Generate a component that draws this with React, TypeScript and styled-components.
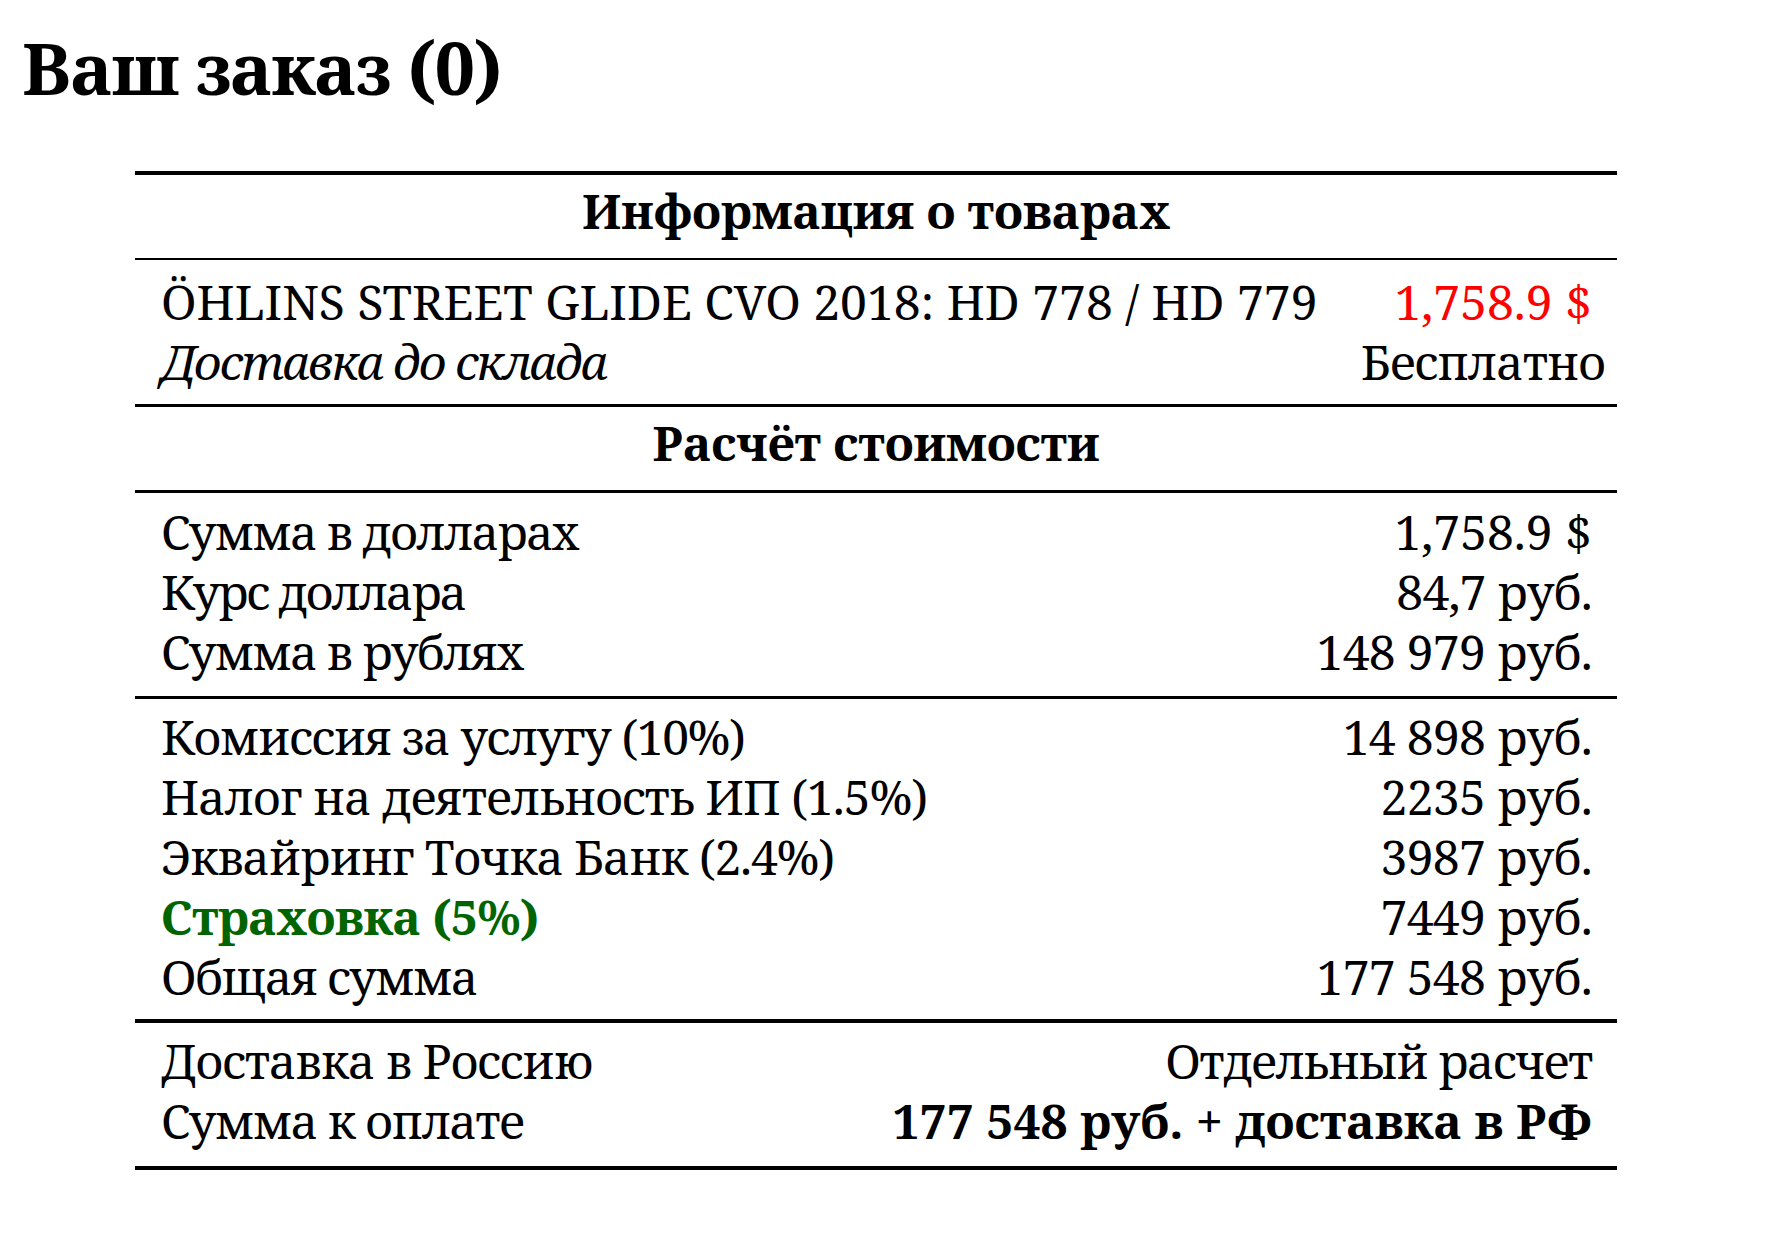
import React from "react";
import styled, { createGlobalStyle } from "styled-components";

const GlobalStyle = createGlobalStyle`
  html, body {
    margin: 0;
    padding: 0;
    background: #ffffff;
  }
  body {
    font-family: "Noto Serif", "DejaVu Serif", serif;
    color: #000000;
  }
`;

const Page = styled.div`
  padding: 24px 22px 60px;
`;

const Title = styled.h1`
  margin: 0;
  font-size: 72px;
  line-height: 86px;
  font-weight: 700;
  letter-spacing: -1.6px;
`;

const Table = styled.div`
  width: 1482px;
  margin: 61px 0 0 113px;
  border-top: 4px solid #000;
  border-bottom: 4px solid #000;
  font-size: 48px;
  line-height: 60px;
`;

const Section = styled.div<{ $pt: number; $pb: number; $rule?: number }>`
  padding: ${(p) => p.$pt}px 12px ${(p) => p.$pb}px 26px;
  border-bottom: ${(p) => (p.$rule ? `${p.$rule}px solid #000` : "none")};
`;

const Heading = styled.div<{ $pt: number; $pb: number; $rule: number }>`
  padding: ${(p) => p.$pt}px 0 ${(p) => p.$pb}px;
  border-bottom: ${(p) => p.$rule}px solid #000;
  text-align: center;
  font-weight: 700;
  letter-spacing: -0.2px;
`;

const Row = styled.div`
  display: flex;
  justify-content: space-between;
  align-items: baseline;
  white-space: nowrap;
`;

const Label = styled.span<{ $italic?: boolean; $accent?: boolean; $ls: number }>`
  font-style: ${(p) => (p.$italic ? "italic" : "normal")};
  font-weight: ${(p) => (p.$accent ? 700 : 400)};
  color: ${(p) => (p.$accent ? "#006400" : "#000")};
  letter-spacing: ${(p) => p.$ls}px;
`;

const Value = styled.span<{ $red?: boolean; $bold?: boolean; $flush?: boolean; $ls: number }>`
  text-align: right;
  padding-right: ${(p) => (p.$flush ? 0 : 13)}px;
  color: ${(p) => (p.$red ? "#ff0000" : "#000")};
  font-weight: ${(p) => (p.$bold ? 700 : 400)};
  letter-spacing: ${(p) => p.$ls}px;
`;

type Line = {
  label: string;
  value: string;
  labelLs?: number;
  valueLs?: number;
  italic?: boolean;
  accent?: boolean;
  red?: boolean;
  bold?: boolean;
  flush?: boolean;
};

const product: Line[] = [
  {
    label: "ÖHLINS STREET GLIDE CVO 2018: HD 778 / HD 779",
    value: "1,758.9 $",
    labelLs: 0,
    valueLs: 0,
    red: true,
  },
  {
    label: "Доставка до склада",
    value: "Бесплатно",
    labelLs: -1.8,
    valueLs: -1,
    italic: true,
    flush: true,
  },
];

const base: Line[] = [
  { label: "Сумма в долларах", value: "1,758.9 $", labelLs: -1.7, valueLs: 0 },
  { label: "Курс доллара", value: "84,7 руб.", labelLs: -2.1, valueLs: -0.8 },
  { label: "Сумма в рублях", value: "148 979 руб.", labelLs: -1.7 },
];

const fees: Line[] = [
  { label: "Комиссия за услугу (10%)", value: "14 898 руб.", labelLs: -1.35 },
  { label: "Налог на деятельность ИП (1.5%)", value: "2235 руб.", labelLs: -1 },
  { label: "Эквайринг Точка Банк (2.4%)", value: "3987 руб.", labelLs: -1.15 },
  { label: "Страховка (5%)", value: "7449 руб.", labelLs: -0.65, accent: true },
  { label: "Общая сумма", value: "177 548 руб.", labelLs: -1.6 },
];

const totals: Line[] = [
  { label: "Доставка в Россию", value: "Отдельный расчет", labelLs: -1.1, valueLs: -1.5 },
  { label: "Сумма к оплате", value: "177 548 руб. + доставка в РФ", labelLs: -1.55, valueLs: 0, bold: true },
];

const Lines = ({ items }: { items: Line[] }) => (
  <>
    {items.map((it) => (
      <Row key={it.label}>
        <Label $italic={it.italic} $accent={it.accent} $ls={it.labelLs ?? -1.2}>
          {it.label}
        </Label>
        <Value $red={it.red} $bold={it.bold} $flush={it.flush} $ls={it.valueLs ?? -0.7}>
          {it.value}
        </Value>
      </Row>
    ))}
  </>
);

export default function App() {
  return (
    <>
      <GlobalStyle />
      <Page>
        <Title>Ваш заказ (0)</Title>
        <Table>
          <Heading $pt={6} $pb={17} $rule={2}>
            Информация о товарах
          </Heading>
          <Section $pt={12} $pb={12} $rule={3}>
            <Lines items={product} />
          </Section>
          <Heading $pt={6} $pb={17} $rule={3}>
            Расчёт стоимости
          </Heading>
          <Section $pt={9} $pb={14} $rule={3}>
            <Lines items={base} />
          </Section>
          <Section $pt={8} $pb={12} $rule={4}>
            <Lines items={fees} />
          </Section>
          <Section $pt={8} $pb={15}>
            <Lines items={totals} />
          </Section>
        </Table>
      </Page>
    </>
  );
}
